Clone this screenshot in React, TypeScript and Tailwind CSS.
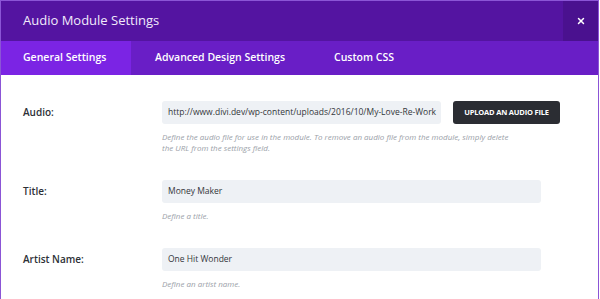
import React from "react";
import { X } from "lucide-react";

const tabs = ["General Settings", "Advanced Design Settings", "Custom CSS"];

function Field({
  label,
  value,
  help,
  upload = false,
}: {
  label: string;
  value: string;
  help: React.ReactNode;
  upload?: boolean;
}) {
  return (
    <div className="flex">
      <div className="w-[139px] shrink-0 h-[23px] flex items-center text-[10px] font-semibold text-[#2c3036]">{label}</div>
      <div className="flex flex-col">
        <div className="flex items-center gap-[12px]">
          <div
            className={`${upload ? "w-[279px]" : "w-[379px]"} h-[23px] rounded-[3px] bg-[#eef1f5] pl-[6px] flex items-center text-[8.5px] text-[#33363b] whitespace-nowrap overflow-hidden`}
          >
            {value}
          </div>
          {upload && (
            <button className="h-[23px] w-[107px] rounded-[3px] bg-[#2b2d33] text-white text-[7.5px] font-bold tracking-tight uppercase">
              Upload an audio file
            </button>
          )}
        </div>
        <div className="mt-[7px] text-[8px] italic leading-[11px] text-[#9aa0a8] whitespace-nowrap">{help}</div>
      </div>
    </div>
  );
}

export default function App() {
  return (
    <div className="w-[600px] h-[299px] bg-white overflow-hidden" style={{ fontFamily: '"Open Sans", sans-serif' }}>
      <div className="w-[599px] border border-b-0 border-[#8b55d6] bg-white h-[299px]">
        <div className="flex h-[40px] bg-[#5414a1]">
          <div className="flex-1 pl-[22px] flex items-center text-[13px] text-[#f1eafb]">Audio Module Settings</div>
          <div className="w-[35px] bg-[#4a118f] flex items-center justify-center text-white">
            <X size={10} strokeWidth={3.5} />
          </div>
        </div>
        <div className="flex h-[34px] bg-[#691ec6]">
          {tabs.map((t, i) => (
            <div
              key={t}
              className={`h-full flex items-center text-[10.5px] font-semibold text-white ${
                i === 0 ? "bg-[#7b24e4] pl-[22px] w-[130px]" : i === 1 ? "pl-[24px] w-[179px]" : "pl-[24px]"
              }`}
            >
              {t}
            </div>
          ))}
        </div>
        <div className="pl-[22px] pt-[26px] flex flex-col gap-[27px]">
          <Field
            label="Audio:"
            value="http://www.divi.dev/wp-content/uploads/2016/10/My-Love-Re-Work"
            upload
            help={
              <>
                Define the audio file for use in the module. To remove an audio file from the module, simply delete
                <br />
                the URL from the settings field.
              </>
            }
          />
          <Field label="Title:" value="Money Maker" help="Define a title." />
          <Field label="Artist Name:" value="One Hit Wonder" help="Define an artist name." />
        </div>
      </div>
    </div>
  );
}
